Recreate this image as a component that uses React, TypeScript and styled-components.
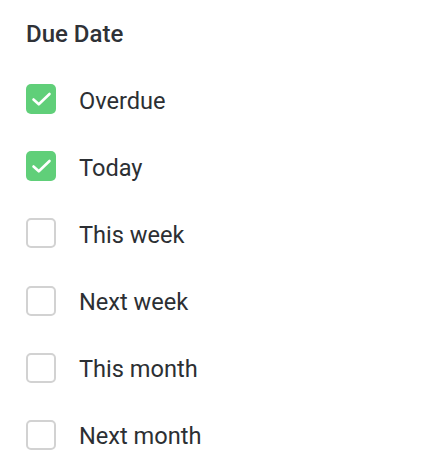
import React, { useState } from "react";
import styled, { createGlobalStyle } from "styled-components";

const Global = createGlobalStyle`
  html, body { margin: 0; padding: 0; background: #ffffff; }
  body { font-family: Roboto, "Noto Sans", "Liberation Sans", sans-serif; }
`;

const Panel = styled.div`
  display: flex;
  flex-direction: column;
  padding: 20px 26px;
`;

const Heading = styled.h3`
  margin: 0 0 36px;
  font-size: 24px;
  line-height: 28px;
  font-weight: 500;
  color: #2f3237;
`;

const List = styled.div`
  display: flex;
  flex-direction: column;
  gap: 37.2px;
`;

const Row = styled.label`
  display: flex;
  align-items: center;
  gap: 23px;
  cursor: pointer;
  height: 30px;
`;

const Box = styled.span<{ $checked: boolean }>`
  box-sizing: border-box;
  width: 30px;
  height: 30px;
  border-radius: 5px;
  flex-shrink: 0;
  display: flex;
  align-items: center;
  justify-content: center;
  background: ${(p) => (p.$checked ? "#60cf79" : "#ffffff")};
  border: ${(p) => (p.$checked ? "none" : "2px solid #d2d2d2")};
`;

const Label = styled.span`
  font-size: 23.6px;
  line-height: 30px;
  margin-top: 3px;
  color: #2c2f33;
`;

const items = [
  { label: "Overdue", checked: true },
  { label: "Today", checked: true },
  { label: "This week", checked: false },
  { label: "Next week", checked: false },
  { label: "This month", checked: false },
  { label: "Next month", checked: false },
];

export default function App() {
  const [state, setState] = useState(items.map((i) => i.checked));
  return (
    <>
      <Global />
      <Panel>
        <Heading>Due Date</Heading>
        <List>
          {items.map((it, i) => (
            <Row
              key={it.label}
              onClick={() => setState((s) => s.map((v, j) => (j === i ? !v : v)))}
            >
              <Box $checked={state[i]}>
                {state[i] && (
                  <svg width="30" height="30" viewBox="0 0 30 30" fill="none">
                    <path
                      d="M7.5 15.5 L12.8 20.3 L23.5 10"
                      stroke="#ffffff"
                      strokeWidth="2.6"
                      strokeLinecap="round"
                      strokeLinejoin="round"
                    />
                  </svg>
                )}
              </Box>
              <Label>{it.label}</Label>
            </Row>
          ))}
        </List>
      </Panel>
    </>
  );
}
